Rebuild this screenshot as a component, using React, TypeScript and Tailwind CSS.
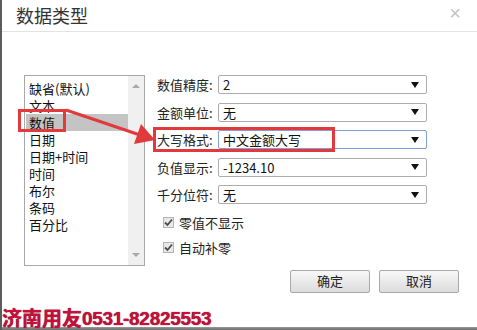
import React from 'react';

const cjk = { fontFamily: '"Noto Sans CJK SC", "Liberation Sans", sans-serif' };

const listItems = ['缺省(默认)', '文本', '数值', '日期', '日期+时间', '时间', '布尔', '条码', '百分比'];

const fields = [
    { label: '数值精度:', value: '2' },
    { label: '金额单位:', value: '无' },
    { label: '大写格式:', value: '中文金额大写', focused: true },
    { label: '负值显示:', value: '-1234.10' },
    { label: '千分位符:', value: '无' },
];

function Select({ value, focused }: { value: string; focused?: boolean }) {
    return (
        <div
            className={`w-[209px] h-[19px] flex items-center justify-between pl-[4px] pr-[7px] rounded-[2px] border bg-white ${
                focused ? 'border-[#7f9fd6]' : 'border-[#acacac]'
            }`}
        >
            <span className="text-[13px] text-[#111] leading-none">{value}</span>
            <span className="w-0 h-0 border-l-[4px] border-r-[4px] border-t-[6px] border-l-transparent border-r-transparent border-t-[#111]" />
        </div>
    );
}

function Check({ label }: { label: string }) {
    return (
        <div className="flex items-center h-[20px] pl-[6px] gap-[5px]">
            <span className="w-[11px] h-[11px] border border-[#b4b4b4] bg-[#e9e9e9] flex items-center justify-center">
                <svg width="9" height="9" viewBox="0 0 9 9">
                    <path d="M1 4.5 L3.5 7 L8 1.5" fill="none" stroke="#4a4a4a" strokeWidth="1.8" />
                </svg>
            </span>
            <span className="text-[13px] text-[#222]">{label}</span>
        </div>
    );
}

export default function App() {
    return (
        <div className="w-[477px] h-[330px] relative overflow-hidden bg-white border-l-2 border-[#5c5c5c] flex flex-col" style={cjk}>
            {/* header */}
            <div className="h-[32px] shrink-0 border-b border-[#e3e3e3] flex items-center justify-between pl-[14px] pr-[16px]">
                <span className="text-[18px] text-[#333] leading-none -mt-[2px]">数据类型</span>
                <span className="text-[20px] text-[#c4c4c4] leading-none -mt-[6px]" style={{ fontFamily: '"Liberation Sans", sans-serif' }}>×</span>
            </div>

            {/* body */}
            <div className="flex pt-[43px] pl-[22px]">
                {/* listbox */}
                <div className="w-[121px] h-[191px] border border-[#a8a8a8] flex">
                    <div className="flex-1 pt-[4px] pl-[1px]">
                        {listItems.map((it) => (
                            <div
                                key={it}
                                className={`h-[17px] pl-[3px] text-[13px] leading-[17px] text-[#111] ${it === '数值' ? 'bg-[#c4c4c4]' : ''}`}
                            >
                                {it}
                            </div>
                        ))}
                    </div>
                    <div className="w-[16px] bg-[#f0f0f0] flex flex-col items-center justify-between py-[8px]">
                        <span className="w-0 h-0 border-l-[4px] border-r-[4px] border-b-[4px] border-l-transparent border-r-transparent border-b-[#a8a8a8]" />
                        <span className="w-0 h-0 border-l-[4px] border-r-[4px] border-t-[4px] border-l-transparent border-r-transparent border-t-[#a8a8a8]" />
                    </div>
                </div>

                {/* form */}
                <div className="pl-[12px] flex flex-col">
                    <div className="flex flex-col gap-[8px]">
                        {fields.map((f) => (
                            <div key={f.label} className="flex items-center">
                                <span className="w-[61px] text-[13px] text-[#222]">{f.label}</span>
                                <Select value={f.value} focused={f.focused} />
                            </div>
                        ))}
                    </div>
                    <div className="flex flex-col gap-[5px] mt-[8px]">
                        <Check label="零值不显示" />
                        <Check label="自动补零" />
                    </div>
                    <div className="flex gap-[9px] pl-[133px] mt-[12px]">
                        {['确定', '取消'].map((b) => (
                            <div
                                key={b}
                                className="w-[80px] h-[23px] rounded-[2px] border border-[#a9a9a9] bg-gradient-to-b from-[#f8f8f8] to-[#dcdcdc] flex items-center justify-center text-[13px] text-[#222]"
                            >
                                {b}
                            </div>
                        ))}
                    </div>
                </div>
            </div>

            {/* bottom screenshot edge */}
            <div className="mt-auto h-[3px] bg-gradient-to-b from-[#9a9a9a] to-[#6a6a6a]" />

            {/* annotations */}
            <div className="absolute left-[16px] top-[109px] w-[48px] h-[23px] border-[3px] border-[#e23a3c]" />
            <div className="absolute left-[151px] top-[127px] w-[182px] h-[25px] border-[3px] border-[#e23a3c]" />
            <svg className="absolute left-0 top-0 pointer-events-none" width="477" height="330">
                <line x1="64" y1="110" x2="138" y2="135" stroke="#e23a3c" strokeWidth="3" />
                <polygon points="153,140 132,144 139,124" fill="#e23a3c" />
            </svg>
            <div
                className="absolute left-0 bottom-[2px] flex items-end leading-none text-[#c80f3a] font-bold"
                style={{ textShadow: '0 0 1px #5a0014' }}
            >
                <span className="text-[20px]" style={{ fontFamily: '"Noto Sans CJK SC", sans-serif' }}>济南用友</span>
                <span className="text-[19px] tracking-[-0.3px]" style={{ fontFamily: '"Liberation Sans", sans-serif' }}>0531-82825553</span>
            </div>
        </div>
    );
}
